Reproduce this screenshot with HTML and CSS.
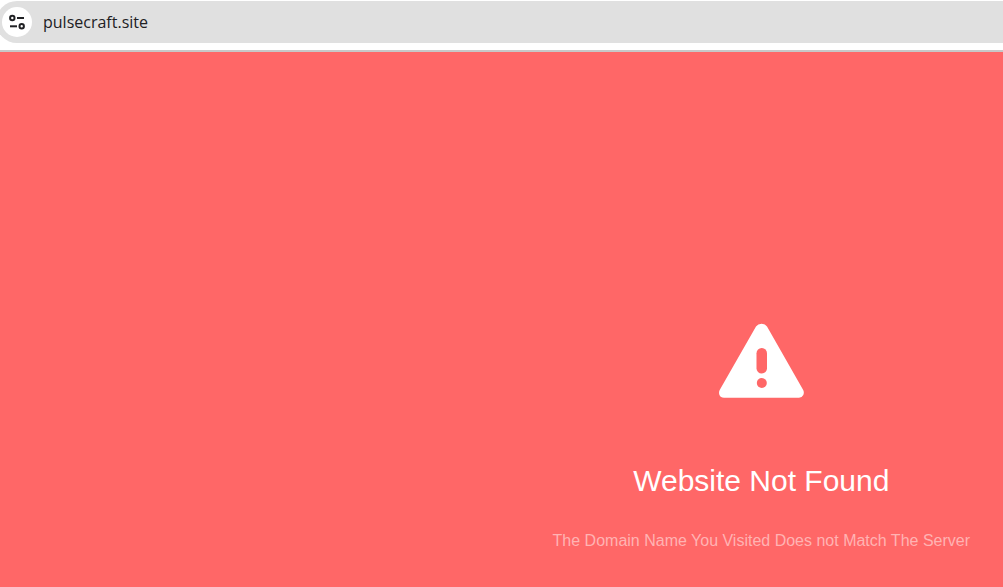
FILE: index.html
```
<!DOCTYPE html>
<html lang="en">
  <head>
    <meta charset="UTF-8" />
    <meta name="viewport" content="width=device-width, initial-scale=1.0" />
    <title>Website Not Found</title>
    <link rel="stylesheet" href="styles.css">
  </head>
  <body>
    <header class="toolbar">
      <div class="address-bar">
        <button type="button" class="site-info" aria-label="View site information">
          <svg width="18" height="18" viewBox="0 0 18 18" fill="none" stroke="#202124" stroke-width="2">
            <circle cx="4.300" cy="5" r="2.200" />
            <path d="M9 5H16" />
            <path d="M2 13.300H9" />
            <circle cx="13.700" cy="13.300" r="2.200" />
          </svg>
        </button>
        <input type="text" class="address-input" aria-label="Address" value="pulsecraft.site" />
      </div>
    </header>
    <main class="error-page">
      <div class="error-message">
        <svg class="warning-icon" width="86" height="76" viewBox="0 0 86 76" role="img" aria-label="Warning">
          <path fill="#fff" d="M38 3.500Q40 .8 43.500 .8Q47 .8 49 3.500L85.200 67Q86.400 69.500 85.300 72Q84 74.700 81 74.700H6Q2.500 74.700 1.500 72Q.5 69.500 1.700 67Z" />
          <rect fill="#ff6767" x="38.500" y="25" width="10.500" height="25.500" rx="5.200" />
          <circle fill="#ff6767" cx="43.800" cy="60" r="5" />
        </svg>
        <h1 class="error-title">Website Not Found</h1>
        <p class="error-text">The Domain Name You Visited Does not Match The Server</p>
      </div>
    </main>
  </body>
</html>
```
FILE: styles.css
```
* {
  box-sizing: border-box;
}

body {
  margin: 0;
  min-height: 100vh;
  display: flex;
  flex-direction: column;
  font-family: "Liberation Sans", Arial, sans-serif;
  background: #ff6767;
}

.toolbar {
  padding: 1px 0 7px;
  background: #fff;
  border-bottom: 2px solid #c8c8c8;
  overflow: hidden;
}

.address-bar {
  display: flex;
  align-items: center;
  gap: 11px;
  height: 42px;
  margin-left: -4px;
  padding-left: 6px;
  background: #e0e0e0;
  border-radius: 21px 0 0 21px;
}

.site-info {
  display: flex;
  align-items: center;
  justify-content: center;
  width: 30px;
  height: 30px;
  padding: 0;
  border: none;
  border-radius: 50%;
  background: #fff;
  cursor: pointer;
}

.address-input {
  flex: 1;
  padding: 0;
  border: none;
  outline: none;
  background: transparent;
  color: #202124;
  font-family: "Open Sans", "Noto Sans", sans-serif;
  font-size: 16px;
}

.error-page {
  flex: 1;
  display: flex;
  justify-content: flex-end;
  align-items: flex-end;
  padding: 36px 33px;
}

.error-message {
  display: flex;
  flex-direction: column;
  align-items: center;
  text-align: center;
}

.error-title {
  margin: 64px 0 32px;
  font-size: 30px;
  font-weight: normal;
  line-height: 36px;
  color: #fff;
}

.error-text {
  margin: 0;
  font-size: 16px;
  line-height: 20px;
  color: #ffb3b3;
}
```
